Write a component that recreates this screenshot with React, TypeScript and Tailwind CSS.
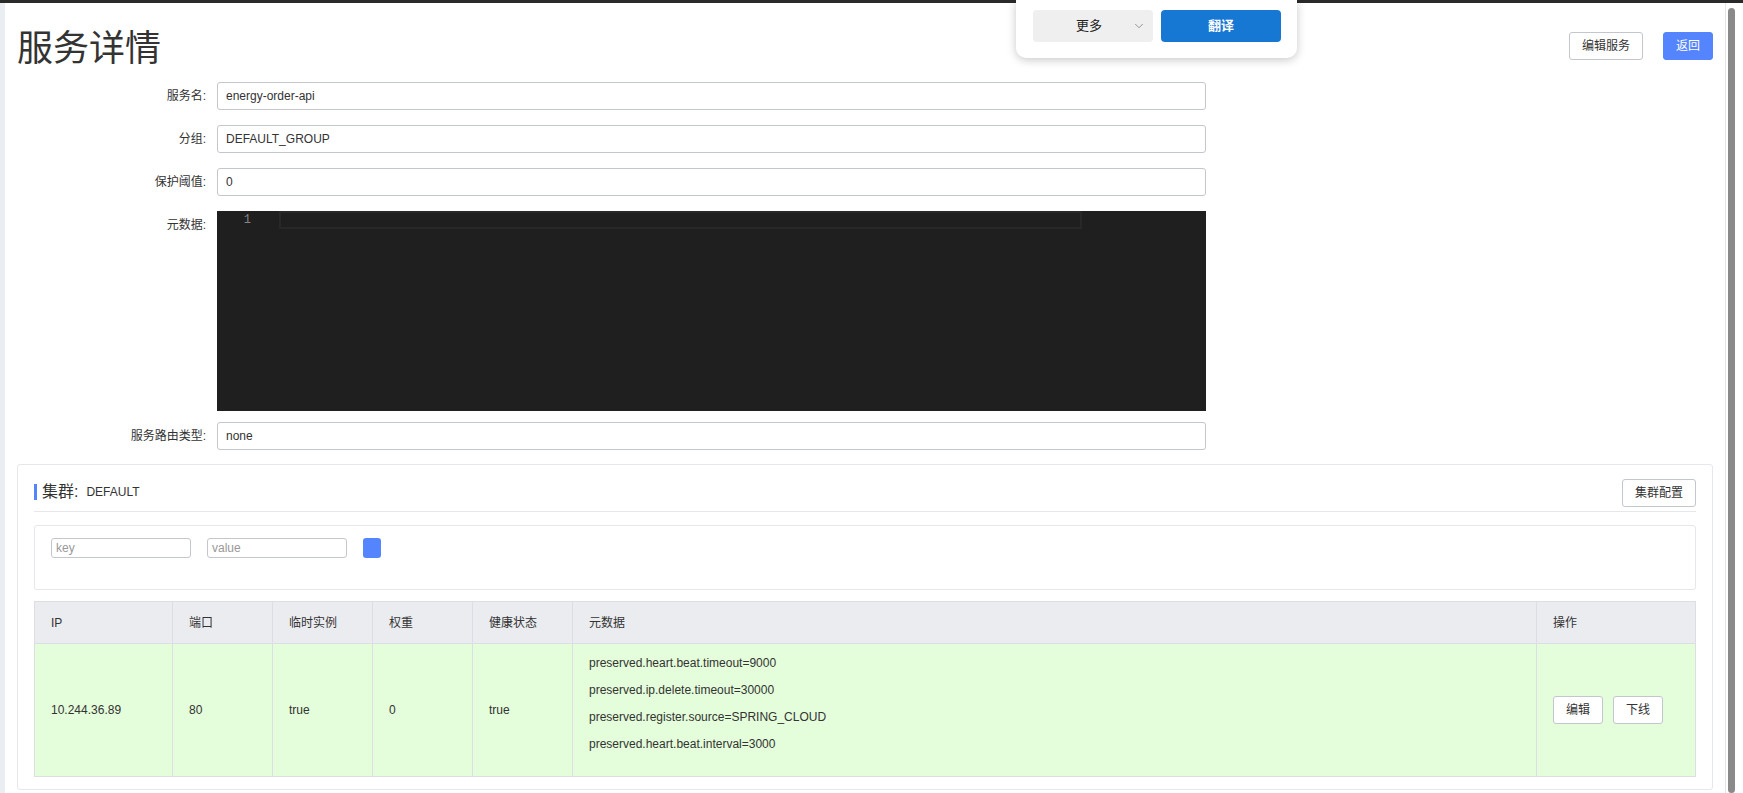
import React from "react";
import { ChevronDown } from "lucide-react";

const metadata = [
  "preserved.heart.beat.timeout=9000",
  "preserved.ip.delete.timeout=30000",
  "preserved.register.source=SPRING_CLOUD",
  "preserved.heart.beat.interval=3000",
];

function FormRow({ label, children, className = "" }: { label: string; children: React.ReactNode; className?: string }) {
  return (
    <div className={`flex items-start ${className}`}>
      <div className="w-[200px] pr-[11px] text-right text-[12px] leading-[28px] text-[#333]">{label}</div>
      <div className="w-[989px]">{children}</div>
    </div>
  );
}

function TextInput({ value }: { value: string }) {
  return (
    <div className="h-[28px] rounded-[3px] border border-[#c4c6cf] bg-white px-[8px] text-[12px] leading-[26px] text-[#333]">
      {value}
    </div>
  );
}

function Btn({ children, primary = false, className = "" }: { children: React.ReactNode; primary?: boolean; className?: string }) {
  return (
    <button
      className={`h-[28px] rounded-[3px] border px-[12px] text-[12px] leading-[26px] ${
        primary ? "border-[#5584ff] bg-[#5584ff] text-white" : "border-[#c4c6cf] bg-white text-[#333]"
      } ${className}`}
    >
      {children}
    </button>
  );
}

export default function App() {
  return (
    <div className="relative flex h-[793px] w-full flex-col overflow-hidden bg-white font-['Liberation_Sans','Noto_Sans_CJK_SC',sans-serif] text-[#333]">
      {/* top dark line */}
      <div className="h-[3px] w-full bg-[#2a2a2a]" />

      <div className="flex flex-1">
        <div className="w-[5px] bg-[#eaedf1]" />

        <main className="flex-1 px-[12px]">
          {/* title row */}
          <div className="flex items-start justify-between">
            <h1 className="mt-[24px] text-[36px] leading-[44px] font-normal text-[#333]">服务详情</h1>
            <div className="mt-[29px] flex gap-[20px]">
              <Btn>编辑服务</Btn>
              <Btn primary>返回</Btn>
            </div>
          </div>

          {/* form */}
          <div className="mt-[11px]">
            <FormRow label="服务名:" className="mb-[15px]">
              <TextInput value="energy-order-api" />
            </FormRow>
            <FormRow label="分组:" className="mb-[15px]">
              <TextInput value="DEFAULT_GROUP" />
            </FormRow>
            <FormRow label="保护阈值:" className="mb-[15px]">
              <TextInput value="0" />
            </FormRow>
            <FormRow label="元数据:" className="mb-[11px]">
              <div className="flex h-[200px] bg-[#1f1f1f]">
                <div className="w-[62px] pr-[28px] text-right font-['Liberation_Mono',monospace] text-[12px] leading-[18px] text-[#858585]">
                  1
                </div>
                <div className="h-[18px] w-[803px] border-2 border-[#282828]" />
              </div>
            </FormRow>
            <FormRow label="服务路由类型:">
              <TextInput value="none" />
            </FormRow>
          </div>

          {/* cluster card */}
          <section className="mt-[14px] rounded-[3px] border border-[#e6e7eb] px-[16px] pt-[14px] pb-[12px]">
            <div className="flex items-start justify-between border-b border-[#e6e7eb] pb-[4px]">
              <div className="mt-[5px] flex items-center border-l-[3px] border-[#5584ff] pl-[5px] leading-[16px]">
                <span className="text-[16px] text-[#333]">集群:</span>
                <span className="ml-[8px] text-[12px] text-[#333]">DEFAULT</span>
              </div>
              <Btn>集群配置</Btn>
            </div>

            <div className="mt-[13px] rounded-[3px] border border-[#e6e7eb] px-[16px] pt-[12px] pb-[31px]">
              <div className="flex items-center gap-[16px]">
                <div className="h-[20px] w-[140px] rounded-[3px] border border-[#c4c6cf] pl-[4px] text-[12px] leading-[18px] text-[#999]">
                  key
                </div>
                <div className="h-[20px] w-[140px] rounded-[3px] border border-[#c4c6cf] pl-[4px] text-[12px] leading-[18px] text-[#999]">
                  value
                </div>
                <div className="h-[20px] w-[18px] rounded-[3px] bg-[#5584ff]" />
              </div>
            </div>

            <table className="mt-[11px] w-full table-fixed border-collapse text-left text-[12px] text-[#333]">
              <colgroup>
                <col className="w-[138px]" />
                <col className="w-[100px]" />
                <col className="w-[100px]" />
                <col className="w-[100px]" />
                <col className="w-[100px]" />
                <col />
                <col className="w-[159px]" />
              </colgroup>
              <thead>
                <tr className="h-[42px] bg-[#ebecf0]">
                  {["IP", "端口", "临时实例", "权重", "健康状态", "元数据", "操作"].map((h) => (
                    <th key={h} className="border border-[#dcdee3] px-[16px] font-normal">
                      {h}
                    </th>
                  ))}
                </tr>
              </thead>
              <tbody>
                <tr className="h-[133px] bg-[#e4fdda]">
                  <td className="border border-[#dcdee3] px-[16px]">10.244.36.89</td>
                  <td className="border border-[#dcdee3] px-[16px]">80</td>
                  <td className="border border-[#dcdee3] px-[16px]">true</td>
                  <td className="border border-[#dcdee3] px-[16px]">0</td>
                  <td className="border border-[#dcdee3] px-[16px]">true</td>
                  <td className="border border-[#dcdee3] px-[16px]">
                    <div className="pb-[13px] leading-[27px]">
                      {metadata.map((m) => (
                        <div key={m}>{m}</div>
                      ))}
                    </div>
                  </td>
                  <td className="border border-[#dcdee3] px-[16px]">
                    <div className="flex gap-[10px]">
                      <Btn className="h-[27px] leading-[25px]">编辑</Btn>
                      <Btn className="h-[27px] leading-[25px]">下线</Btn>
                    </div>
                  </td>
                </tr>
              </tbody>
            </table>
          </section>
        </main>

        {/* scrollbar */}
        <div className="w-[18px] border-l border-[#e6e6e6] bg-white pt-[5px] pl-[2px]">
          <div className="h-full w-[7px] rounded-full bg-[#8a8a8a]" />
        </div>
      </div>

      {/* translate popup */}
      <div className="absolute top-0 left-[1016px] flex h-[58px] w-[281px] gap-[8px] rounded-b-[10px] bg-white pt-[10px] pl-[17px] shadow-[0_2px_10px_rgba(0,0,0,0.22)]">
        <div className="relative flex h-[32px] w-[120px] items-center rounded-[4px] bg-[#efefef] pl-[43px] text-[13px] text-[#222]">
          更多
          <ChevronDown className="absolute top-[9px] right-[7px] text-[#777]" size={14} strokeWidth={1.3} />
        </div>
        <div className="flex h-[32px] w-[120px] items-center justify-center rounded-[4px] bg-[#1778d4] text-[13px] font-bold text-white">
          翻译
        </div>
      </div>
    </div>
  );
}
